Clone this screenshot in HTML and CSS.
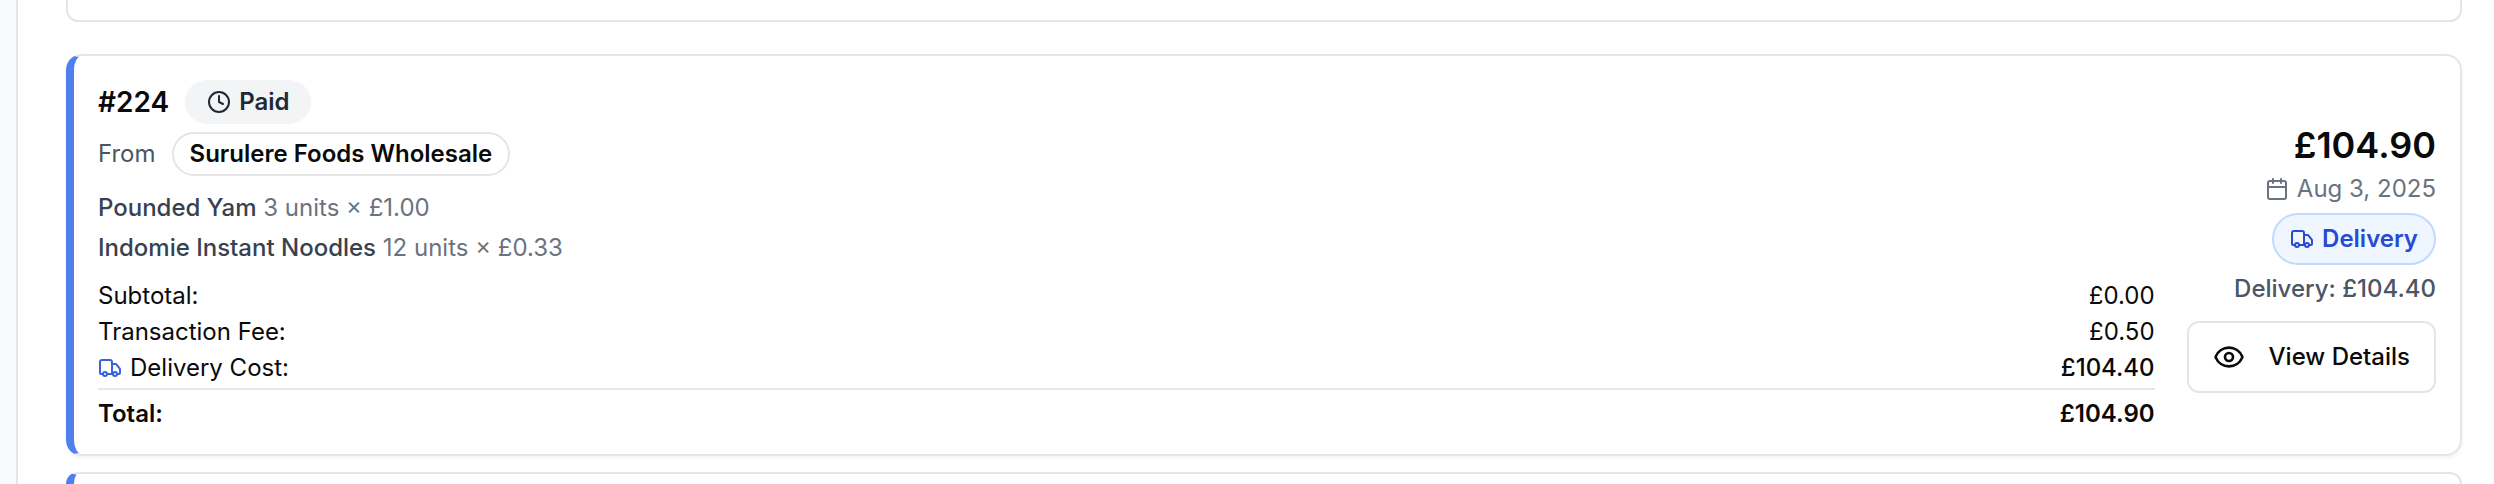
FILE: index.html
```html
<!DOCTYPE html>
<html lang="en">
<head>
<meta charset="utf-8">
<title>Orders</title>
<link rel="stylesheet" href="styles.css">
</head>
<body>
<svg class="sprite" aria-hidden="true">
  <symbol id="clock" viewBox="0 0 24 24"><circle cx="12" cy="12" r="10"/><path d="M12 6v6l4 2"/></symbol>
  <symbol id="truck" viewBox="0 0 24 24"><path d="M14 18V6a2 2 0 0 0-2-2H4a2 2 0 0 0-2 2v11a1 1 0 0 0 1 1h2"/><path d="M15 18H9"/><path d="M19 18h2a1 1 0 0 0 1-1v-3.65a1 1 0 0 0-.22-.624l-3.48-4.35A1 1 0 0 0 17.52 8H14"/><circle cx="17" cy="18" r="2"/><circle cx="7" cy="18" r="2"/></symbol>
  <symbol id="calendar" viewBox="0 0 24 24"><path d="M8 2v4"/><path d="M16 2v4"/><rect width="18" height="18" x="3" y="4" rx="2"/><path d="M3 10h18"/></symbol>
  <symbol id="eye" viewBox="0 0 24 24"><path d="M2.062 12.348a1 1 0 0 1 0-.696 10.75 10.75 0 0 1 19.876 0 1 1 0 0 1 0 .696 10.75 10.75 0 0 1-19.876 0"/><circle cx="12" cy="12" r="3"/></symbol>
</svg>
<div class="app">
  <aside class="sidebar"></aside>
  <main class="content">
    <section class="panel"></section>
    <div class="orders">
      <article class="order">
        <div class="order-main">
          <div class="order-row">
            <h2 class="order-id">#224</h2>
            <span class="badge badge-status"><svg class="icon"><use href="#clock"/></svg>Paid</span>
          </div>
          <div class="order-row">
            <span class="from">From</span>
            <span class="badge badge-outline">Surulere Foods Wholesale</span>
          </div>
          <ul class="items">
            <li><span class="item-name">Pounded Yam</span> <span class="item-qty">3 units × £1.00</span></li>
            <li><span class="item-name">Indomie Instant Noodles</span> <span class="item-qty">12 units × £0.33</span></li>
          </ul>
          <dl class="costs">
            <div class="cost"><dt>Subtotal:</dt><dd>£0.00</dd></div>
            <div class="cost"><dt>Transaction Fee:</dt><dd>£0.50</dd></div>
            <div class="cost"><dt><svg class="icon icon-blue"><use href="#truck"/></svg>Delivery Cost:</dt><dd class="medium">£104.40</dd></div>
            <div class="cost cost-total"><dt>Total:</dt><dd>£104.90</dd></div>
          </dl>
        </div>
        <div class="order-side">
          <p class="amount">£104.90</p>
          <p class="date"><svg class="icon"><use href="#calendar"/></svg><time datetime="2025-08-03">Aug 3, 2025</time></p>
          <span class="badge badge-delivery"><svg class="icon"><use href="#truck"/></svg>Delivery</span>
          <p class="delivery-cost">Delivery: £104.40</p>
          <button class="view" type="button"><svg class="icon icon-large"><use href="#eye"/></svg>View Details</button>
        </div>
      </article>
      <article class="order order-next"></article>
    </div>
  </main>
</div>
</body>
</html>
```
FILE: styles.css
```css
* { box-sizing: border-box; margin: 0; padding: 0; }

body {
  background: #fff;
  color: #0a0a0a;
  font: 400 24px/32px Inter, "Liberation Sans", sans-serif;
  font-optical-sizing: none;
}

.sprite { position: absolute; width: 0; height: 0; }

.app { display: flex; min-height: 100vh; }
.sidebar { flex: none; width: 18px; background: #f9fafb; border-right: 2px solid #e5e5e5; }
.content { flex: 1; display: flex; flex-direction: column; gap: 32px; padding: 0 32px 0 48px; }

.panel { height: 22px; border: 2px solid #e5e5e5; border-top: 0; border-radius: 0 0 12px 12px; }
.orders { flex: 1; display: flex; flex-direction: column; gap: 16px; }

.order {
  display: flex;
  align-items: center;
  gap: 32px;
  padding: 24px;
  border: 2px solid #e5e5e5;
  border-left: 8px solid #4f80ee;
  border-radius: 16px;
  box-shadow: 0 2px 4px rgb(0 0 0 / 5%);
}
.order-next {
  flex: 1;
  padding: 0;
  border-bottom: 0;
  border-bottom-left-radius: 0;
  border-bottom-right-radius: 0;
  box-shadow: none;
}

.order-main { flex: 1; min-width: 0; display: flex; flex-direction: column; gap: 8px; }
.order-row { display: flex; align-items: center; gap: 16px; }
.order-id { font-size: 28px; line-height: 40px; font-weight: 600; }
.from { color: #4b5563; }

.badge {
  display: inline-flex;
  align-items: center;
  gap: 8px;
  padding: 4px 16px;
  border: 2px solid transparent;
  border-radius: 26px;
  font-weight: 600;
}
.badge-status { padding: 4px 20px; background: #f3f4f6; color: #1f2937; }
.badge-outline { border-color: #e5e5e5; }
.badge-delivery { padding: 8px 16px; background: #eff6ff; border-color: #bfdbfe; color: #274bd2; }

.icon {
  flex: none;
  width: 24px;
  height: 24px;
  fill: none;
  stroke: currentColor;
  stroke-width: 2;
  stroke-linecap: round;
  stroke-linejoin: round;
}
.icon-large { width: 32px; height: 32px; }
.icon-blue { color: #3662e3; }

.items { display: flex; flex-direction: column; gap: 8px; margin-top: 8px; list-style: none; }
.item-name { color: #374151; font-weight: 500; }
.item-qty { color: #6b7280; }

.costs { display: flex; flex-direction: column; gap: 4px; margin-top: 8px; }
.cost { display: flex; justify-content: space-between; }
.cost dt { display: flex; align-items: center; gap: 8px; }
.medium { font-weight: 500; }
.cost-total { padding-top: 8px; border-top: 2px solid #e5e7eb; font-weight: 600; }

.order-side { flex: none; display: flex; flex-direction: column; align-items: flex-end; gap: 8px; }
.amount { margin-bottom: -8px; font-size: 36px; line-height: 56px; font-weight: 600; }
.date { display: flex; align-items: center; gap: 8px; color: #6b7280; }
.delivery-cost { color: #4b5563; font-weight: 500; }

.view {
  display: inline-flex;
  align-items: center;
  gap: 24px;
  height: 72px;
  margin-top: 8px;
  padding: 0 24px;
  background: #fff;
  border: 2px solid #e5e5e5;
  border-radius: 12px;
  color: inherit;
  font: inherit;
  font-weight: 500;
}
```
